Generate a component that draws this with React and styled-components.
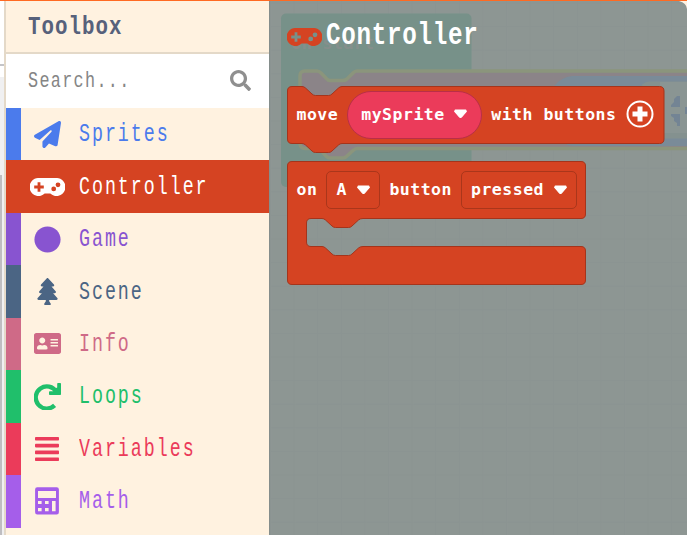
import React from "react";
import styled, { createGlobalStyle } from "styled-components";
import { FaAddressCard, FaCircle, FaSearch, FaTree } from "react-icons/fa";
import { FaPaperPlane } from "react-icons/fa6";

const GlobalStyle = createGlobalStyle`
  * {
    box-sizing: border-box;
  }

  body {
    margin: 0;
    overflow: hidden;
  }
`;

const GamepadIcon = ({ color = "currentColor" }) => (
  <svg width="35" height="18" viewBox="0 0 35 18">
    <path
      fill={color}
      fillRule="evenodd"
      d="M9 0H26A9 9 0 1 1 20.300 15.500H14.700A9 9 0 1 1 9 0ZM7.600 4.200V7.600H4.200V10.400H7.600V13.800H10.400V10.400H13.800V7.600H10.400V4.200ZM23.700 8.500A2.400 2.400 0 1 0 23.700 13.300A2.400 2.400 0 1 0 23.700 8.500ZM28 4.400A2.400 2.400 0 1 0 28 9.200A2.400 2.400 0 1 0 28 4.400Z"
    />
  </svg>
);

const RedoIcon = () => (
  <svg width="27" height="27" viewBox="0 0 27 27">
    <path
      d="M22.400 8.800A11.100 11.100 0 1 0 20.600 22.400"
      fill="none"
      stroke="currentColor"
      strokeWidth="4.300"
    />
    <path
      d="M24 0H26.200Q27 0 27 0.800V11.200Q27 12 26.200 12H15.800Q15 12 15 11.200V9Q15 8.300 15.800 8.300H19.400L21 5.500L23.200 4.500V0.800Q23.200 0 24 0Z"
      fill="currentColor"
    />
  </svg>
);

const LinesIcon = () => (
  <svg width="24" height="24" viewBox="0 0 24 24" fill="currentColor">
    <rect y="0" width="24" height="3.6" rx="0.8" />
    <rect y="6.8" width="24" height="3.6" rx="0.8" />
    <rect y="13.6" width="24" height="3.6" rx="0.8" />
    <rect y="20.4" width="24" height="3.6" rx="0.8" />
  </svg>
);

const CalculatorIcon = () => (
  <svg width="24" height="28" viewBox="0 0 24 28">
    <path
      fill="currentColor"
      fillRule="evenodd"
      d="M2.5 0.3H21.5A2.3 2.3 0 0 1 23.9 2.6V25.2A2.3 2.3 0 0 1 21.5 27.5H2.5A2.3 2.3 0 0 1 0.1 25.2V2.6A2.3 2.3 0 0 1 2.5 0.3ZM3 4V11H21V4ZM3 14V17H6.6V14ZM10 14V17H13.6V14ZM17 14V24.2H20.6V14ZM3 21V24.2H6.6V21ZM10 21V24.2H13.6V21Z"
    />
  </svg>
);

const categories = [
  { name: "Sprites", color: "#4b7bec", icon: <FaPaperPlane size={27} /> },
  { name: "Controller", color: "#d54322", icon: <GamepadIcon />, active: true },
  { name: "Game", color: "#8854d0", icon: <FaCircle size={27} /> },
  { name: "Scene", color: "#4b6584", icon: <FaTree size={27} /> },
  { name: "Info", color: "#cf6a87", icon: <FaAddressCard size={27} /> },
  { name: "Loops", color: "#20bf6b", icon: <RedoIcon /> },
  { name: "Variables", color: "#eb3b5a", icon: <LinesIcon /> },
  { name: "Math", color: "#a55eea", icon: <CalculatorIcon /> },
];

const Workspace = () => (
  <Backdrop width="418" height="535" viewBox="269 0 418 535">
    <defs>
      <pattern id="grid" x="270" y="2.5" width="23.6" height="23.6" patternUnits="userSpaceOnUse">
        <path d="M0 0.5H23.6M0.5 0V23.6" stroke="#8a9391" strokeWidth="1" />
      </pattern>
    </defs>
    <rect x="269" width="418" height="535" fill="#8d9693" />
    <rect x="269" width="418" height="535" fill="url(#grid)" opacity="0.75" />
    <rect x="281" y="13.5" width="190.5" height="173.5" rx="5" fill="#779189" />
    <GhostText x="291" y="49">on start</GhostText>
    <path
      d="M300 76Q300 71 305 71H317Q319 71 321 73L327 79Q328 80.500 330 80.500H343Q345 80.500 347 79L353 73Q355 71 357 71H700V148.500H357Q355 148.500 353 150.500L347 156Q345 158 343 158H330Q328 158 326 156L321 150.500Q319 148.500 317 148.500H305Q300 148.500 300 143Z"
      fill="#8b8488"
      stroke="#8b957c"
      strokeWidth="3.5"
    />
    <path d="M700 76H572Q551 78 545 110Q551 142 572 146H700Z" fill="#7a8b98" />
    <rect x="640" y="81.500" width="60" height="57" rx="9" fill="#84918f" />
    <rect x="660" y="82" width="40" height="51" fill="#8a9593" />
    <path
      d="M671 107V105L674 102V99L677 96H680V107ZM671 114H680V126H677V123L674 121V118L671 116ZM685 107H690V114H685Z"
      fill="#738494"
    />
    <path d="M679 1H687V9Q686.500 3 679 1Z" fill="#fff3e3" />
    <rect x="269" width="1" height="535" fill="#858e8c" />
  </Backdrop>
);

const Dropdown = ({ children, ...props }) => (
  <Field {...props}>
    {children}
    <Arrow viewBox="0 0 12 9">
      <path
        d="M1.200 1H10.800L11.400 2.300L7 7.300Q6 8.400 5 7.300L0.600 2.300Z"
        fill="#fff"
        stroke="#fff"
        strokeWidth="1"
        strokeLinejoin="round"
      />
    </Arrow>
  </Field>
);

const MoveBlock = () => (
  <Block $width={378} $height={58} $gap={9}>
    <Shape width="379" height="69" viewBox="0 0 379 69">
      <path d="M0.500 5Q0.500 0.500 5 0.500H15Q17 0.500 18.500 2L25 8Q26.500 9.500 28.500 9.500H41.500Q43.500 9.500 45 8L51.500 2Q53 0.500 55 0.500H372.500Q377 0.500 377 5V53Q377 57.500 372.500 57.500H55Q53 57.500 51.500 59L45 65Q43.500 66.500 41.500 66.500H28.500Q26.500 66.500 25 65L18.500 59Q17 57.500 15 57.500H5Q0.500 57.500 0.500 53Z" />
    </Shape>
    <Word>move</Word>
    <Dropdown $width={135} $height={48} $pill>
      mySprite
    </Dropdown>
    <Word>with buttons</Word>
    <PlusIcon width="28" height="28" viewBox="0 0 28 28">
      <circle cx="14" cy="14" r="12.500" fill="none" stroke="#fff" strokeWidth="2" />
      <path d="M14 6.500V21.500M6.500 14H21.500" stroke="#fff" strokeWidth="5" />
    </PlusIcon>
  </Block>
);

const EventBlock = () => (
  <Block $width={300} $height={58} $gap={9}>
    <Shape width="300" height="125" viewBox="0 0 300 125">
      <path d="M0.500 5Q0.500 0.500 5 0.500H294Q298.500 0.500 298.500 5V53Q298.500 57.500 294 57.500H76Q73 57.500 71.500 59L65 65Q63.500 66.500 61.500 66.500H48.500Q46.500 66.500 45 65L38.500 59Q37 57.500 35 57.500H24Q19.500 57.500 19.500 62V81Q19.500 85.500 24 85.500H35Q37 85.500 38.500 87L45 93Q46.500 94.500 48.500 94.500H61.500Q63.500 94.500 65 93L71.500 87Q73 85.500 76 85.500H294Q298.500 85.500 298.500 90V119Q298.500 123.500 294 123.500H5Q0.500 123.500 0.500 119Z" />
    </Shape>
    <Word>on</Word>
    <Dropdown $width={54} $height={38}>
      A
    </Dropdown>
    <Word>button</Word>
    <Dropdown $width={116} $height={38}>
      pressed
    </Dropdown>
  </Block>
);

const App = () => (
  <Page>
    <GlobalStyle />
    <Simulator>
      <SimulatorTop />
      <SimulatorBody />
      <SimulatorThumb />
    </Simulator>
    <Toolbox>
      <Header>
        <Heading>Toolbox</Heading>
      </Header>
      <Search>
        <Placeholder>Search...</Placeholder>
        <SearchIcon size={21} />
      </Search>
      {categories.map(({ name, color, icon, active }) => (
        <Category key={name} $color={color} $active={active}>
          <IconSlot>{icon}</IconSlot>
          <Label>{name}</Label>
        </Category>
      ))}
    </Toolbox>
    <Flyout>
      <Workspace />
      <FlyoutHeader>
        <GamepadIcon color="#d54322" />
        <FlyoutTitle>Controller</FlyoutTitle>
      </FlyoutHeader>
      <Blocks>
        <MoveBlock />
        <EventBlock />
      </Blocks>
    </Flyout>
  </Page>
);

const Page = styled.div`
  display: flex;
  width: 687px;
  height: 535px;
  overflow: hidden;
  border-top: 1px solid #ff6a22;
  background: #fff;
`;

const Simulator = styled.div`
  display: flex;
  flex-direction: column;
  width: 4px;
`;

const SimulatorTop = styled.div`
  height: 65px;
  border-bottom: 2px solid #c4c4c7;
`;

const SimulatorBody = styled.div`
  height: 98px;
  margin-top: 11px;
  background: #f0f0f1;
`;

const SimulatorThumb = styled.div`
  flex: 1;
  background: #f0f0f1;
  border-left: 2px solid #bfbec1;
`;

const Toolbox = styled.div`
  width: 265px;
  border-left: 2px solid #e4d9c8;
  background: #fff2e0;
`;

const Header = styled.div`
  height: 53px;
  padding: 10px 0 0 22px;
  border-bottom: 2px solid #e4d9c8;
`;

/* Liberation Mono squeezed into a condensed face */
const Condensed = styled.div`
  font-family: "Liberation Mono", monospace;
  white-space: pre;
  transform-origin: left center;
`;

const Heading = styled(Condensed)`
  font-size: 26.5px;
  line-height: 32px;
  font-weight: bold;
  letter-spacing: 1.3px;
  transform: scaleX(0.785);
  color: #57617b;
`;

const Search = styled.div`
  display: flex;
  align-items: center;
  justify-content: space-between;
  height: 54px;
  padding: 0 18px 0 22px;
  background: #fff;
  color: #8f8f8f;
`;

const SearchIcon = styled(FaSearch)`
  margin-top: -2px;
`;

const Placeholder = styled(Condensed)`
  width: 120px;
  font-size: 22.5px;
  letter-spacing: 1.8px;
  transform: scaleX(0.745);
  color: #858585;
`;

const Category = styled.div`
  display: flex;
  align-items: center;
  height: 52.45px;
  border-left: 15px solid ${({ $color }) => $color};
  background: ${({ $color, $active }) => ($active ? $color : "transparent")};
  color: ${({ $color, $active }) => ($active ? "#fff" : $color)};
`;

const IconSlot = styled.div`
  display: flex;
  flex: none;
  align-items: center;
  justify-content: center;
  width: 52px;
`;

const Label = styled(Condensed)`
  margin: 2px 0 0 5.5px;
  font-size: 25px;
  line-height: 30px;
  letter-spacing: 2.7px;
  transform: scaleX(0.732);
`;

const Flyout = styled.div`
  position: relative;
  flex: 1;
  padding-left: 18px;
`;

const Backdrop = styled.svg`
  position: absolute;
  top: -1px;
  left: 0;
  clip-path: inset(1px 0 0 0);
`;

const GhostText = styled.text`
  font-family: "DejaVu Sans Mono", monospace;
  font-size: 17.3px;
  font-weight: bold;
  fill: #858f8c;
`;

const FlyoutHeader = styled.div`
  position: relative;
  display: flex;
  align-items: center;
  height: 84.5px;
  padding-bottom: 12.5px;
`;

const FlyoutTitle = styled(Condensed)`
  margin: -3px 0 0 4px;
  font-size: 31px;
  line-height: 36px;
  font-weight: bold;
  letter-spacing: 0.9px;
  transform: scaleX(0.782);
  color: #fff;
`;

const Blocks = styled.div`
  position: relative;
  display: flex;
  flex-direction: column;
  gap: 17.5px;
`;

const Block = styled.div`
  position: relative;
  display: flex;
  align-items: center;
  gap: ${({ $gap }) => $gap}px;
  width: ${({ $width }) => $width}px;
  height: ${({ $height }) => $height}px;
  padding-left: 9.5px;
  font-family: "DejaVu Sans Mono", monospace;
  font-size: 16.5px;
  font-weight: bold;
  letter-spacing: 0.5px;
  color: #fff;

  > * {
    position: relative;
    flex: none;
  }
`;

const Shape = styled.svg`
  && {
    position: absolute;
    top: 0;
    left: 0;
    fill: #d54322;
    stroke: #a5341b;
  }
`;

const Word = styled.span`
  margin-top: -1px;
  white-space: pre;
`;

const PlusIcon = styled.svg`
  margin: -1px 0 0 0.5px;
`;

const Field = styled.div`
  display: flex;
  align-items: center;
  justify-content: space-between;
  width: ${({ $width }) => $width}px;
  height: ${({ $height }) => $height}px;
  padding: ${({ $pill }) => ($pill ? "0 14px 1px 13px" : "0 9px 1px 9px")};
  border: 1px solid ${({ $pill }) => ($pill ? "#b92f47" : "#aa361b")};
  border-radius: ${({ $pill }) => ($pill ? 24 : 5)}px;
  background: ${({ $pill }) => ($pill ? "#eb3b5a" : "transparent")};
`;

const Arrow = styled.svg`
  width: 13px;
  height: 9.75px;
`;

export default App;
